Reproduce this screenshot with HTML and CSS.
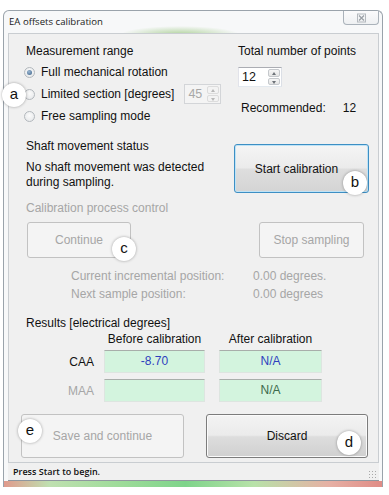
FILE: index.html
```html
<!DOCTYPE html>
<html>
<head>
<meta charset="utf-8">
<title>EA offsets calibration</title>
<link rel="stylesheet" href="styles.css">
</head>
<body>
<div class="screen">
  <div class="window">
    <div class="titlebar">
      <span class="title">EA offsets calibration</span>
      <span class="close">
        <svg width="11" height="10" viewBox="0 0 11 10"><rect x="1.5" y="1" width="8" height="8" fill="none" stroke="#b4b9be" stroke-width="1"/><path d="M3 2.5 L8 7.5 M8 2.5 L3 7.5" stroke="#9aa0a6" stroke-width="1.3"/></svg>
      </span>
    </div>
    <div class="panel">
      <section class="top">
        <div class="range">
          <div class="label">Measurement range</div>
          <div class="radio-row"><span class="radio checked"></span><span>Full mechanical rotation</span></div>
          <div class="radio-row"><span class="radio"></span><span>Limited section [degrees]</span>
            <span class="spin spin-small disabled"><span class="spin-val">45</span><span class="spin-btns"><span class="sb up"></span><span class="sb down"></span></span></span>
          </div>
          <div class="radio-row"><span class="radio"></span><span>Free sampling mode</span></div>
        </div>
        <div class="points">
          <div class="label">Total number of points</div>
          <span class="spin spin-points"><span class="spin-val">12</span><span class="spin-btns"><span class="sb up"></span><span class="sb down"></span></span></span>
          <div class="recommended"><span>Recommended:</span><span>12</span></div>
        </div>
      </section>

      <section class="shaft">
        <div class="shaft-text">
          <div class="label">Shaft movement status</div>
          <div class="status-msg">No shaft movement was detected<br>during sampling.</div>
        </div>
        <button class="btn btn-focus btn-start">Start calibration</button>
      </section>

      <section class="control">
        <div class="label muted">Calibration process control</div>
        <div class="control-btns">
          <button class="btn btn-disabled btn-continue">Continue</button>
          <button class="btn btn-disabled btn-stop">Stop sampling</button>
        </div>
        <div class="info muted">
          <span>Current incremental position:</span><span>0.00 degrees.</span>
          <span>Next sample position:</span><span>0.00 degrees</span>
        </div>
      </section>

      <section class="results">
        <div class="label">Results [electrical degrees]</div>
        <div class="res-grid">
          <span></span><span class="head">Before calibration</span><span class="head">After calibration</span>
          <span class="rlabel">CAA</span><span class="box blue">-8.70</span><span class="box blue">N/A</span>
          <span class="rlabel muted">MAA</span><span class="box"></span><span class="box green">N/A</span>
        </div>
      </section>

      <section class="bottom-btns">
        <button class="btn btn-disabled btn-save">Save and continue</button>
        <button class="btn btn-normal btn-discard">Discard</button>
      </section>
    </div>
    <div class="statusbar">
      <span>Press Start to begin.</span>
      <span class="grip"></span>
    </div>
    <div class="frame-bottom"></div>
  </div>

  <span class="badge badge-a">a</span>
  <span class="badge badge-b">b</span>
  <span class="badge badge-c">c</span>
  <span class="badge badge-d">d</span>
  <span class="badge badge-e">e</span>
</div>
</body>
</html>
```

FILE: styles.css
```css
* { box-sizing: border-box; }
html, body { margin: 0; padding: 0; background: #ffffff; }
body { font-family: "Liberation Sans", Arial, sans-serif; font-size: 12px; color: #111; }

.screen {
  position: relative;
  width: 389px;
  height: 495px;
  padding: 10px 0 0 3px;
  overflow: hidden;
}

.window {
  width: 380px;
  border: 1px solid #9aa3ab;
  border-bottom: none;
  border-radius: 6px 6px 0 0;
  padding: 0 3px 0 4px;
  background: #f7f8f9;
}

.titlebar {
  height: 22px;
  display: flex;
  align-items: flex-start;
  justify-content: space-between;
  background: radial-gradient(ellipse 60px 9px at 172px 24px, rgba(110,175,70,0.55), rgba(110,175,70,0));
}
.title {
  font-family: "Open Sans", "Noto Sans", sans-serif;
  font-size: 9.6px;
  line-height: 22px;
  padding-left: 1px;
  color: #1a1a1a;
}
.close {
  width: 36px;
  height: 14px;
  border: 1px solid #aab2ba;
  border-top: none;
  border-radius: 0 0 4px 4px;
  background: linear-gradient(#fbfbfc, #eef0f2);
  display: flex;
  align-items: center;
  justify-content: center;
}
.close svg { display: block; }

.panel {
  border: 1px solid #c9cdd1;
  background: #f0f0f0;
  padding: 9px 9px 4px 17px;
}

.label { line-height: 16px; }
.muted { color: #a6a6a6; }

/* top */
.top {
  display: grid;
  grid-template-columns: 212px 1fr;
}
.radio-row {
  height: 22px;
  display: flex;
  align-items: center;
  margin-left: -3px;
}
.range .label { margin-bottom: 2px; }
.radio {
  width: 11px;
  height: 11px;
  border-radius: 50%;
  border: 1px solid #b3b8bd;
  background: radial-gradient(circle at 50% 40%, #fbfbfb, #e3e5e7);
  margin: 0 6px 0 1px;
  flex: none;
  position: relative;
}
.radio.checked::after {
  content: "";
  position: absolute;
  left: 2px; top: 2px;
  width: 5px; height: 5px;
  border-radius: 50%;
  background: radial-gradient(circle at 40% 35%, #9bb8d4, #3a5f84);
}

.spin {
  display: inline-flex;
  background: #fff;
  border: 1px solid #abadb3;
  border-color: #abadb3 #dbdfe6 #e3e9ef #e2e3ea;
  height: 20px;
  padding: 1px;
}
.spin-val { flex: 1; padding-left: 2px; line-height: 16px; font-size: 12.5px; }
.spin-btns { width: 12px; display: flex; flex-direction: column; gap: 1px; }
.sb {
  flex: 1;
  border: 1px solid #c5c8cc;
  border-radius: 2px;
  background: linear-gradient(#f6f6f6, #e4e4e4);
  position: relative;
}
.sb::after {
  content: "";
  position: absolute;
  left: 3px; top: 2px;
  border-left: 2px solid transparent;
  border-right: 2px solid transparent;
}
.sb.up::after { border-bottom: 3px solid #6d7278; }
.sb.down::after { border-top: 3px solid #6d7278; top: 2px; }

.spin-small { width: 37px; height: 20px; margin-left: 10px; }
.spin.disabled { background: #f4f4f4; border-color: #d3d5d8; color: #a8a8a8; }
.spin.disabled .sb { border-color: #dcdcdc; background: #f3f3f3; }
.spin.disabled .sb.up::after { border-bottom-color: #b8b8b8; }
.spin.disabled .sb.down::after { border-top-color: #b8b8b8; }

.points { display: flex; flex-direction: column; align-items: flex-start; }
.spin-points { width: 44px; margin-top: 8px; }
.recommended { margin-top: 13px; padding-left: 3px; line-height: 16px; display: flex; gap: 17px; }

/* shaft */
.shaft { display: flex; margin-top: 11px; }
.status-msg { margin-top: 6px; line-height: 15px; }

.btn {
  font-family: "Liberation Sans", Arial, sans-serif;
  font-size: 12px;
  border-radius: 3px;
  padding: 0;
  margin: 0;
}
.btn-focus {
  border: 1px solid #3d8fc4;
  box-shadow: inset 0 0 0 1px #bfe3f6;
  background: linear-gradient(#f5f5f5, #ebebeb 48%, #dedede 52%, #d4d4d4);
  color: #111;
}
.btn-normal {
  border: 1px solid #7c7c7c;
  box-shadow: inset 0 0 0 1px #fbfbfb;
  background: linear-gradient(#f3f3f3, #ebebeb 48%, #dddddd 52%, #d0d0d0);
  color: #111;
}
.btn-disabled {
  border: 1px solid #c2c2c2;
  background: #f4f4f4;
  color: #a6a6a6;
}
.btn-start { margin-left: auto; margin-top: 6px; width: 135px; height: 49px; padding-right: 10px; }

/* control */
.control { margin-top: 7px; }
.control-btns { display: flex; justify-content: space-between; margin-top: 6px; padding: 0 5px 0 1px; }
.btn-continue { width: 104px; height: 36px; }
.btn-stop { width: 105px; height: 36px; }
.info {
  display: grid;
  grid-template-columns: 182px auto;
  line-height: 18px;
  margin-top: 9px;
  padding-left: 45px;
}

/* results */
.results { margin-top: 12px; }
.res-grid {
  display: grid;
  grid-template-columns: 64px 101px 103px;
  column-gap: 14px;
  row-gap: 6px;
  align-items: center;
}
.head { text-align: center; line-height: 16px; margin-bottom: -3px; }
.rlabel { text-align: right; margin-right: -4px; }
.box {
  height: 23px;
  background: #d3f4de;
  border: 1px solid #dde5e0;
  border-top: 1px solid #a8aeaa;
  text-align: center;
  line-height: 21px;
}
.box.blue { color: #2f3fbf; }
.box.green { color: #3d6a4c; }

/* bottom */
.bottom-btns { display: flex; margin-top: 12px; margin-left: -5px; gap: 22px; }
.btn-save { width: 163px; height: 44px; }
.btn-discard { width: 162px; height: 44px; }

.statusbar {
  height: 18px;
  display: flex;
  align-items: center;
  justify-content: space-between;
  padding: 0 3px 0 5px;
  font-family: "Open Sans", "Noto Sans", sans-serif;
  font-size: 9px;
  font-weight: 600;
  color: #111;
  background: #f0f0f0;
  border-bottom: 1px solid #8f979e;
}
.grip {
  width: 8px; height: 8px;
  background-image: radial-gradient(circle, #a9a9a9 0.8px, transparent 1px);
  background-size: 3px 3px;
  align-self: flex-end;
  margin-bottom: 2px;
}
.frame-bottom {
  height: 6px;
  margin: 0 -3px 0 -4px;
  background: linear-gradient(90deg, #e09a8c, #bfe0b0 12%, #9fdc9a 30%, #7ed48a 48%, #b7e2a8 66%, #e6b0a4 86%, #e08c86);
}

/* annotation badges */
.badge {
  position: absolute;
  width: 24px;
  height: 24px;
  border-radius: 50%;
  background: #fff;
  box-shadow: 0 0 3px rgba(0,0,0,0.35);
  font-family: "Liberation Sans", Arial, sans-serif;
  font-size: 15px;
  line-height: 22px;
  text-align: center;
  color: #111;
}
.badge-a { left: 2px; top: 83px; }
.badge-b { left: 343px; top: 171px; }
.badge-c { left: 112px; top: 237px; }
.badge-d { left: 337px; top: 431px; }
.badge-e { left: 18px; top: 419px; }
```
